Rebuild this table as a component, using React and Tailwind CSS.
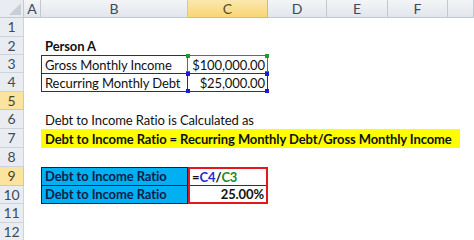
import React from "react";

const FONT = { fontFamily: "Lato, 'Liberation Sans', sans-serif" };

const COLS = ["A", "B", "C", "D", "E", "F", ""];

function ColHead({ label, active }) {
  return (
    <div
      className={`flex items-center justify-center border-r border-b text-[14px] leading-none ${
        active
          ? "bg-gradient-to-b from-[#fbe8ae] to-[#f8d673] border-[#e9b949] text-[#5b4a1f]"
          : "bg-gradient-to-b from-[#f3f5f8] to-[#e2e6ec] border-[#c3c9d2] text-[#3e4a5a]"
      }`}
    >
      {label}
    </div>
  );
}

function RowHead({ n, active }) {
  return (
    <div
      className={`flex items-center justify-center border-r border-b text-[14px] leading-none ${
        active
          ? "bg-[#fbe3a0] border-[#e9c76a] text-[#4f4322]"
          : "bg-[#e9edf2] border-[#cdd3db] text-[#3e4a5a]"
      }`}
    >
      {n}
    </div>
  );
}

function Handles({ color }) {
  return (
    <>
      <div className={`absolute -left-[2px] -top-[2px] w-[4px] h-[4px] ${color}`} />
      <div className={`absolute -right-[2px] -top-[2px] w-[4px] h-[4px] ${color}`} />
      <div className={`absolute -left-[2px] -bottom-[2px] w-[4px] h-[4px] ${color}`} />
      <div className={`absolute -right-[2px] -bottom-[2px] w-[4px] h-[4px] ${color}`} />
    </>
  );
}

export default function App() {
  return (
    <div className="w-[474px] h-[240px] overflow-hidden bg-white text-[#111]" style={FONT}>
      <div className="grid grid-cols-[24px_17px_147px_80px_59px_61px_60px_26px] grid-rows-[18px_19px_18px_18px_19px_18px_19px_19px_19px_19px_18px_19px_19px] text-[13px] leading-[16px] tracking-[-0.1px]">
        {/* header row */}
        <div className="bg-[#e9edf2] border-r border-b border-[#c3c9d2] relative">
          <svg className="absolute right-[2px] bottom-[2px]" width="12" height="12" viewBox="0 0 12 12">
            <polygon points="12,0 12,12 0,12" fill="#c9ced6" />
          </svg>
        </div>
        {COLS.map((c) => (
          <ColHead key={c || "g"} label={c} active={c === "C"} />
        ))}

        {/* row 1 */}
        <RowHead n={1} />
        <div className="col-span-7" />

        {/* row 2 */}
        <RowHead n={2} />
        <div />
        <div className="col-span-6 flex items-end pl-[4px] pb-[1px] font-bold whitespace-nowrap">Person A</div>

        {/* row 3 */}
        <RowHead n={3} />
        <div />
        <div className="border-l border-t border-r border-[#333] flex items-end pl-[3px] whitespace-nowrap">Gross Monthly Income</div>
        <div className="relative border-t border-r border-[#333] flex items-end justify-end pr-[2px] whitespace-nowrap">
          $100,000.00
          <div className="absolute -left-[1px] -top-[1px] -right-[1px] -bottom-[1px] border border-[#1e9a2c]">
            <Handles color="bg-[#1e9a2c]" />
          </div>
        </div>
        <div className="col-span-4" />

        {/* row 4 */}
        <RowHead n={4} />
        <div />
        <div className="border-l border-t border-b border-r border-[#333] flex items-end pl-[3px] whitespace-nowrap">Recurring Monthly Debt</div>
        <div className="relative border-t border-b border-r border-[#333] flex items-end justify-end pr-[2px] whitespace-nowrap">
          $25,000.00
          <div className="absolute -left-[1px] -top-[1px] -right-[1px] -bottom-[1px] border border-[#2222dd]">
            <Handles color="bg-[#1a1ad8]" />
          </div>
        </div>
        <div className="col-span-4" />

        {/* row 5 */}
        <RowHead n={5} active />
        <div className="col-span-7" />

        {/* row 6 */}
        <RowHead n={6} />
        <div />
        <div className="col-span-6 flex items-end pl-[4px] pb-[1px] whitespace-nowrap">
          Debt to Income Ratio is Calculated as
        </div>

        {/* row 7 */}
        <RowHead n={7} />
        <div />
        <div className="col-span-6 flex">
          <div className="w-[419px] bg-[#ffff00] flex items-end pl-[4px] pb-[1px] font-bold whitespace-nowrap">
            Debt to Income Ratio = Recurring Monthly Debt/Gross Monthly Income
          </div>
        </div>

        {/* row 8 */}
        <RowHead n={8} />
        <div className="col-span-7" />

        {/* rows 9-10 */}
        <RowHead n={9} active />
        <div />
        <div className="row-span-2 flex flex-col border border-[#222] bg-[#00b0f0] text-[#141c4a] font-bold">
          <div className="flex-1 min-h-0 flex items-end pl-[3px] pb-[1px] border-b border-[#222] whitespace-nowrap">Debt to Income Ratio</div>
          <div className="flex-1 min-h-0 flex items-end pl-[3px] pb-[1px] whitespace-nowrap">Debt to Income Ratio</div>
        </div>
        <div className="row-span-2 flex flex-col border-2 border-[#e5161d] font-bold">
          <div className="flex-1 min-h-0 flex items-end pl-[2px] border-b border-[#333] whitespace-nowrap">
            <span>=</span>
            <span className="text-[#1f2bd6]">C4</span>
            <span>/</span>
            <span className="text-[#1a8a2a]">C3</span>
          </div>
          <div className="flex-1 min-h-0 flex items-end justify-end pr-[2px] whitespace-nowrap">25.00%</div>
        </div>
        <div className="col-span-4" />

        <RowHead n={10} />
        <div />
        <div className="col-span-4" />

        {/* row 11 */}
        <RowHead n={11} />
        <div className="col-span-7" />

        {/* row 12 */}
        <RowHead n={12} />
        <div className="col-span-7" />
      </div>
    </div>
  );
}
